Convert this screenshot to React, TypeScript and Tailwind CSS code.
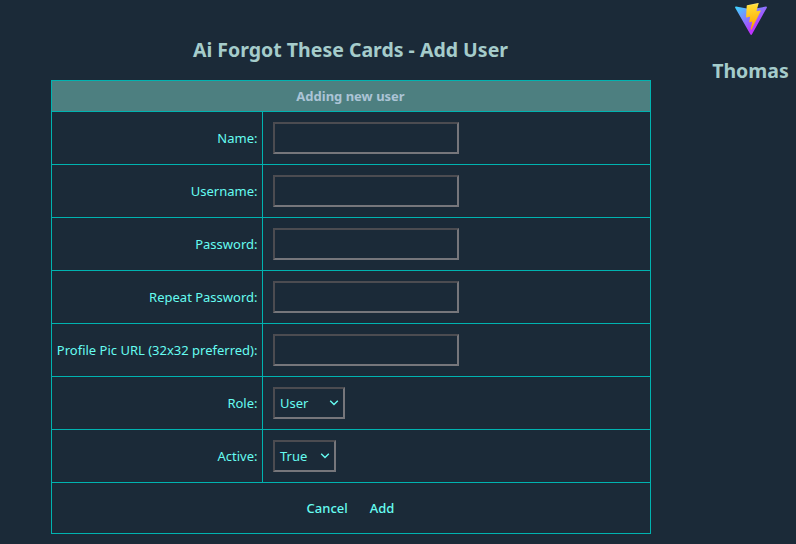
import type { ReactNode } from "react";

const fieldClass =
  "box-border h-8 rounded-none border-2 border-t-[#4c4c51] border-l-[#4c4c51] border-r-[#76767b] border-b-[#76767b] bg-[#1b2a38] text-[#66fcf1] outline-none";

function Row({ label, children }: { label: string; children: ReactNode }) {
  return (
    <div className="flex h-[53px] border-b border-[#00b3b0]">
      <label className="flex w-[211px] items-center justify-end border-r border-[#00b3b0] pt-0.5 pr-[4.5px] whitespace-nowrap">
        {label}
      </label>
      <div className="flex items-center pl-2.5">{children}</div>
    </div>
  );
}

function Chevron() {
  return (
    <svg className="h-[6px] w-[10px]" viewBox="0 0 10 6" fill="none" stroke="currentColor" strokeWidth="1.4">
      <path d="M1.2 0.8L5 4.6L8.8 0.8" />
    </svg>
  );
}

function Picker({ value, width }: { value: string; width: string }) {
  return (
    <button className={`${fieldClass} ${width} flex items-center justify-between pr-1 pl-[5px]`}>
      <span className="pt-0.5">{value}</span>
      <Chevron />
    </button>
  );
}

function Logo() {
  return (
    <svg className="h-8 w-8" viewBox="0 0 256 257">
      <defs>
        <linearGradient id="body" x1="-.828%" x2="57.636%" y1="7.652%" y2="78.411%">
          <stop offset="0%" stopColor="#41D1FF" />
          <stop offset="100%" stopColor="#BD34FE" />
        </linearGradient>
        <linearGradient id="bolt" x1="43.376%" x2="50.316%" y1="2.242%" y2="89.03%">
          <stop offset="0%" stopColor="#FFEA83" />
          <stop offset="8.333%" stopColor="#FFDD35" />
          <stop offset="100%" stopColor="#FFA800" />
        </linearGradient>
      </defs>
      <path
        fill="url(#body)"
        d="M255.153 37.938L134.897 252.976c-2.483 4.44-8.862 4.466-11.382.048L.875 37.958c-2.746-4.814 1.371-10.646 6.827-9.67l120.385 21.517a6.537 6.537 0 0 0 2.322-.004l117.867-21.483c5.438-.991 9.574 4.796 6.877 9.62Z"
      />
      <path
        fill="url(#bolt)"
        d="M185.432.063L96.44 17.501a3.268 3.268 0 0 0-2.634 3.014l-5.474 92.456a3.268 3.268 0 0 0 3.997 3.378l24.777-5.718c2.318-.535 4.413 1.507 3.936 3.838l-7.361 36.047c-.495 2.426 1.782 4.5 4.151 3.78l15.304-4.649c2.372-.72 4.652 1.36 4.15 3.788l-11.698 56.621c-.732 3.542 3.979 5.473 5.943 2.437l1.313-2.028l72.516-144.72c1.215-2.423-.88-5.186-3.54-4.672l-25.505 4.922c-2.396.462-4.435-1.77-3.759-4.114l16.646-57.705c.677-2.35-1.37-4.583-3.769-4.113Z"
      />
    </svg>
  );
}

export default function App() {
  return (
    <div className="flex h-[544px] w-[796px] items-start bg-[#1b2a38] font-['Noto_Sans',sans-serif] text-[13px] text-[#66fcf1]">
      <main className="ml-[51px] w-[600px] pt-9">
        <h1 className="h-11 pr-px text-center text-[19.5px] leading-7 font-bold text-[#a5cccb]">
          Ai Forgot These Cards - Add User
        </h1>
        <section className="border border-b-0 border-[#00b3b0]">
          <h2 className="h-[31px] border-b border-[#00b3b0] bg-[#4d7f80] pr-px text-center leading-[31px] font-bold text-[#abc4d6]">
            Adding new user
          </h2>
          {["Name:", "Username:", "Password:", "Repeat Password:", "Profile Pic URL (32x32 preferred):"].map((label) => (
            <Row key={label} label={label}>
              <input className={`${fieldClass} w-[186px] px-[5px]`} />
            </Row>
          ))}
          <Row label="Role:">
            <Picker value="User" width="w-[72px]" />
          </Row>
          <Row label="Active:">
            <Picker value="True" width="w-[63px]" />
          </Row>
          <div className="flex h-[51px] items-center justify-center gap-[22px] border-b border-[#00b3b0] pt-0.5 pr-px font-medium">
            <button>Cancel</button>
            <button>Add</button>
          </div>
        </section>
      </main>
      <aside className="ml-[61px] flex w-[78px] flex-col items-center pt-[3px]">
        <Logo />
        <div className="mt-[22px] pr-px text-[19.5px] leading-7 font-bold text-[#a5cccb]">Thomas</div>
      </aside>
    </div>
  );
}
